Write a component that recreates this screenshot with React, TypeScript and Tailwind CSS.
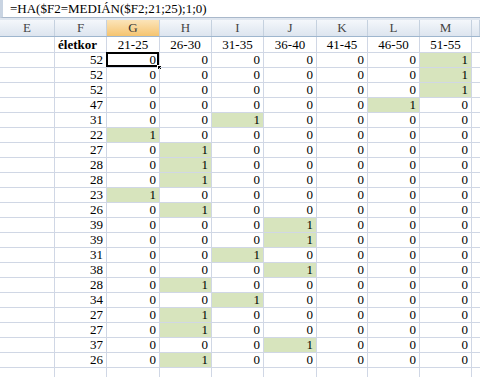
const cols = ["E", "F", "G", "H", "I", "J", "K", "L", "M", ""];
const ranges = ["21-25", "26-30", "31-35", "36-40", "41-45", "46-50", "51-55"];
const ages = [52, 52, 52, 47, 31, 22, 27, 28, 28, 23, 26, 39, 39, 31, 38, 28, 34, 27, 27, 37, 26];

// which range column (0 = G) holds the 1
const bucket = (a: number) => {
  if (a >= 21 && a <= 25) return 0;
  if (a <= 30) return 1;
  if (a <= 35) return 2;
  if (a <= 40) return 3;
  if (a <= 45) return 4;
  if (a <= 50) return 5;
  if (a <= 55) return 6;
  return -1;
};

const gridCols = "grid grid-cols-[55px_52px_53px_52px_52px_53px_51px_52px_52px_1fr]";

const App = () => {
  return (
    <div
      className="w-[480px] h-[377px] overflow-hidden bg-white text-black"
      style={{ fontFamily: '"Liberation Serif", "Times New Roman", serif' }}
    >
      {/* formula bar */}
      <div className="h-[20px] bg-[#dfe6ef] pb-[2px]">
        <div className="h-[18px] bg-white border-l-[3px] border-l-[#c9d4e2] border-b border-b-[#a9b8cb] pl-[7px] text-[13px] leading-[17px] whitespace-nowrap">
          =HA($F2=MEDIÁN($F2;21;25);1;0)
        </div>
      </div>

      {/* column headers */}
      <div className={`${gridCols} h-[17px] border-b border-b-[#9eb6ce]`}>
        {cols.map((c, i) => (
          <div
            key={i}
            className={`border-r border-r-[#c5d1df] text-center text-[13px] leading-[16px] ${
              c === "G"
                ? "bg-gradient-to-b from-[#fbe4b8] to-[#f5c46f] text-[#333]"
                : "bg-gradient-to-b from-[#f4f7fb] to-[#dde5ef] text-[#444]"
            }`}
          >
            {c}
          </div>
        ))}
      </div>

      {/* label row */}
      <div className={`${gridCols} h-[16px]`}>
        <div className="border-r border-b border-[#d0d7e5]" />
        <div className="border-r border-b border-[#d0d7e5] pl-[3px] text-[13px] leading-[15px] font-bold">életkor</div>
        {ranges.map((r) => (
          <div key={r} className="border-r border-b border-[#d0d7e5] text-center text-[13px] leading-[15px]">
            {r}
          </div>
        ))}
        <div className="border-b border-[#d0d7e5]" />
      </div>

      {/* data rows */}
      {ages.map((a, ri) => {
        const b = bucket(a);
        return (
          <div key={ri} className={`${gridCols} h-[15px]`}>
            <div className="border-r border-b border-[#d0d7e5]" />
            <div className="border-r border-b border-[#d0d7e5] pr-[3px] text-right text-[13px] leading-[14px]">{a}</div>
            {ranges.map((r, ci) => {
              const on = ci === b;
              const sel = ri === 0 && ci === 0;
              return (
                <div
                  key={r}
                  className={`relative border-r border-b border-[#d0d7e5] pr-[3px] text-right text-[13px] leading-[14px] ${
                    on ? "bg-[#d7e4bd]" : ""
                  }`}
                >
                  {on ? 1 : 0}
                  {sel && (
                    <>
                      <div className="absolute -left-[1px] -top-[1px] -right-[0px] -bottom-[0px] border-2 border-black pointer-events-none" />
                      <div className="absolute -right-[3px] -bottom-[3px] w-[5px] h-[5px] bg-black border border-white" />
                    </>
                  )}
                </div>
              );
            })}
            <div className="border-b border-[#d0d7e5]" />
          </div>
        );
      })}

      {/* empty trailing row */}
      <div className={`${gridCols} h-[15px]`}>
        {cols.map((_, i) => (
          <div key={i} className={i < 9 ? "border-r border-[#d0d7e5]" : ""} />
        ))}
      </div>
    </div>
  );
};

export default App;
